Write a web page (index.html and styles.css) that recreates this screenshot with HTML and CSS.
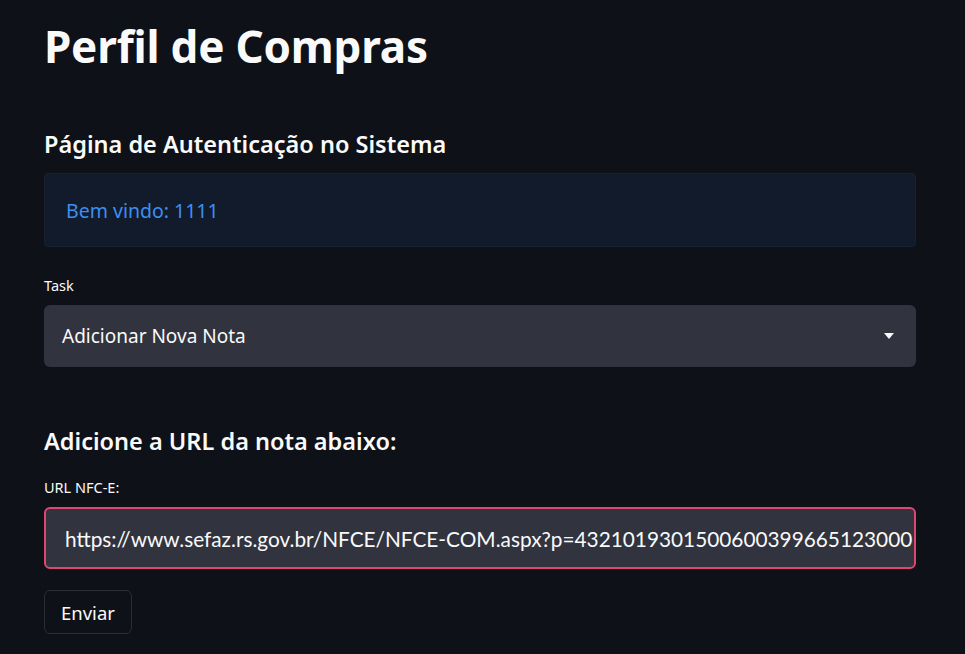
FILE: index.html
```html
<!DOCTYPE html>
<html lang="pt">
<head>
<meta charset="utf-8">
<title>Perfil de Compras</title>
<link rel="stylesheet" href="styles.css">
</head>
<body>
<main class="main">
  <h1 class="title">Perfil de Compras</h1>
  <h3 class="subtitle first">Página de Autenticação no Sistema</h3>
  <div class="info">Bem vindo: 1111</div>
  <label class="label">Task</label>
  <div class="select">
    <span class="select-value">Adicionar Nova Nota</span>
    <svg class="caret" width="10" height="6" viewBox="0 0 10 6"><path d="M0 0h10L5 6z" fill="#fafafa"/></svg>
  </div>
  <h3 class="subtitle second">Adicione a URL da nota abaixo:</h3>
  <label class="label">URL NFC-E:</label>
  <div class="input"><span class="input-text">https://www.sefaz.rs.gov.br/NFCE/NFCE-COM.aspx?p=43210193015006003996651230003</span></div>
  <button class="btn">Enviar</button>
</main>
</body>
</html>
```
FILE: styles.css
```css
html, body {
  margin: 0;
  padding: 0;
  background: #0e1117;
  color: #fafafa;
  font-family: "Noto Sans", "Open Sans", sans-serif;
}
.main {
  width: 872px;
  margin-left: 44px;
  display: flex;
  flex-direction: column;
  align-items: flex-start;
}
.title {
  margin: 0;
  margin-top: 16px;
  font-size: 44px;
  font-weight: 700;
  line-height: 60px;
  letter-spacing: -0.2px;
}
.subtitle {
  margin: 0;
  font-size: 23.5px;
  font-weight: 600;
  line-height: 32px;
}
.subtitle.first { margin-top: 52px; }
.subtitle.second { margin-top: 58px; }
.info {
  box-sizing: border-box;
  width: 100%;
  margin-top: 13px;
  height: 74px;
  padding: 0 21px;
  display: flex;
  align-items: center;
  background: #111b2b;
  border: 1px solid #172133;
  border-radius: 4px;
  color: #3d8ff0;
  font-size: 19.5px;
}
.label {
  margin-top: 28px;
  font-size: 14.5px;
  line-height: 20px;
}
.subtitle + .label { margin-top: 20px; }
.select {
  box-sizing: border-box;
  width: 100%;
  margin-top: 10px;
  height: 62px;
  padding: 0 22px 0 18px;
  display: flex;
  align-items: center;
  justify-content: space-between;
  background: #31333f;
  border-radius: 6px;
  font-size: 19px;
}
.input {
  box-sizing: border-box;
  width: 100%;
  margin-top: 10px;
  height: 62px;
  padding: 0 0 0 19px;
  display: flex;
  align-items: center;
  background: #31333f;
  border: 2px solid #e0466e;
  border-radius: 6px;
  font-family: "Lato", sans-serif;
  font-size: 20.8px;
  white-space: nowrap;
  overflow: hidden;
}
.input-text {
  display: block;
  width: 848px;
  overflow: hidden;
}
.btn {
  margin-top: 21px;
  height: 44px;
  padding: 0 16px;
  background: #0e1117;
  color: #fafafa;
  border: 1px solid #2a2d35;
  border-radius: 6px;
  font-family: "Noto Sans", sans-serif;
  font-size: 18.5px;
}
```
